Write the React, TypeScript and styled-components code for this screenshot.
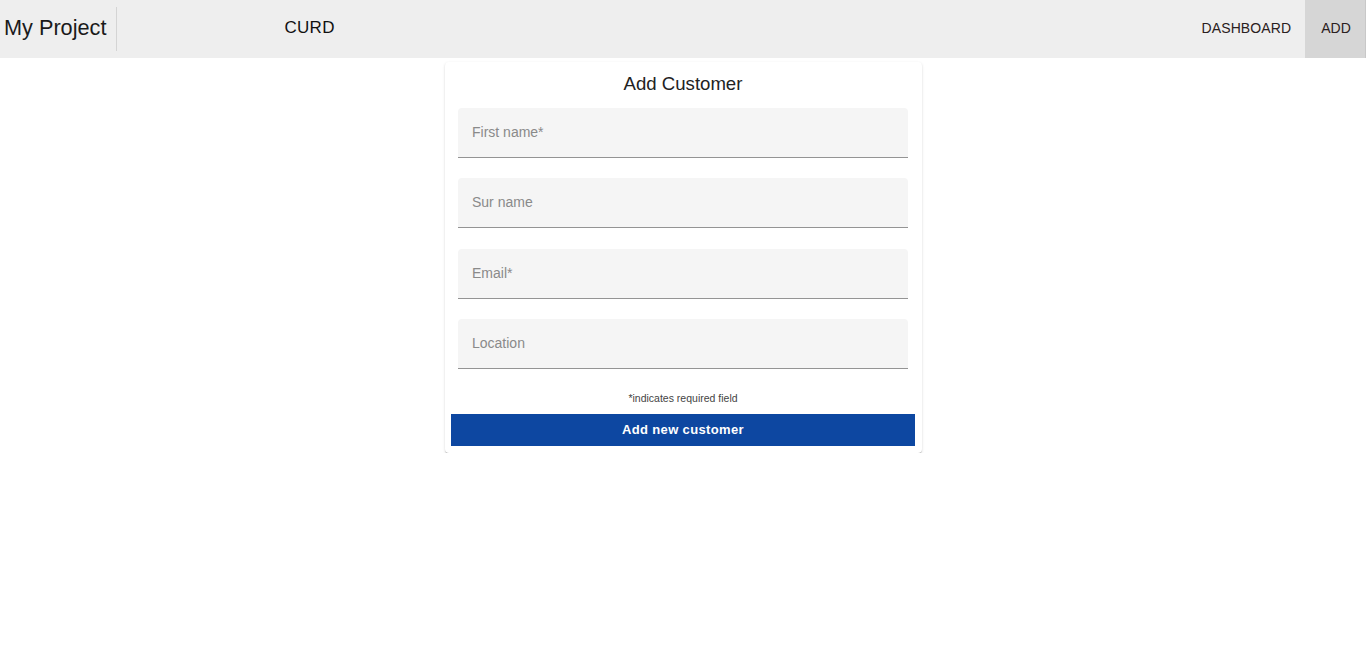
import React from "react";
import styled, { createGlobalStyle } from "styled-components";

const Global = createGlobalStyle`
  html, body { margin: 0; padding: 0; background: #fff; }
  body { font-family: "Liberation Sans", Arial, sans-serif; color: #222; }
  * { box-sizing: border-box; }
`;

const Header = styled.header`
  height: 58px;
  background: #eeeeee;
  display: flex;
  align-items: stretch;
`;

const Brand = styled.div`
  display: flex;
  align-items: center;
  padding: 0 10px 2px 4px;
  font-size: 21.7px;
  color: #1a1a1a;
  border-right: 1px solid #d4d4d4;
  margin: 7px 0;
`;

const Title = styled.div`
  display: flex;
  align-items: center;
  margin-left: 167px;
  padding-bottom: 2px;
  font-size: 17px;
  letter-spacing: 0.3px;
  color: #111;
  flex: 1;
`;

const NavButton = styled.div<{ $active?: boolean }>`
  display: flex;
  align-items: center;
  padding: ${(p) => (p.$active ? "0 14px 2px 16px" : "0 14px 2px")};
  font-size: 14px;
  letter-spacing: 0.1px;
  color: #2a2020;
  background: ${(p) => (p.$active ? "#d6d6d6" : "transparent")};
  border-right: ${(p) => (p.$active ? "1px solid #c8c8c8" : "none")};
`;

const Main = styled.main`
  display: flex;
  justify-content: center;
  padding-top: 4px;
`;

const Card = styled.div`
  width: 477px;
  background: #fff;
  border-radius: 4px;
  box-shadow: 0 2px 1px -1px rgba(0,0,0,0.2), 0 1px 1px 0 rgba(0,0,0,0.14), 0 1px 3px 0 rgba(0,0,0,0.12);
  padding: 12px 7px 7px;
  display: flex;
  flex-direction: column;
  align-items: center;
`;

const CardTitle = styled.h2`
  margin: 0;
  font-weight: 400;
  font-size: 18.6px;
  color: #222;
  height: 34px;
  line-height: 20px;
`;

const Fields = styled.div`
  width: 450px;
  display: flex;
  flex-direction: column;
  gap: 20.33px;
`;

const Field = styled.div`
  height: 50px;
  background: #f5f5f5;
  border-radius: 4px 4px 0 0;
  border-bottom: 1px solid #949494;
  display: flex;
  align-items: center;
  padding: 0 14px 1px;
  font-size: 14px;
  color: #8a8a8a;
`;

const Helper = styled.div`
  font-size: 10.5px;
  line-height: 12px;
  color: #444;
  margin-top: 23px;
  height: 22px;
`;

const Submit = styled.button`
  width: 464px;
  height: 32px;
  border: none;
  background: #0d47a1;
  color: #fff;
  font-family: "Liberation Sans", Arial, sans-serif;
  font-weight: 700;
  font-size: 13px;
  letter-spacing: 0.35px;
`;

export default function App() {
  return (
    <>
      <Global />
      <Header>
        <Brand>My Project</Brand>
        <Title>CURD</Title>
        <NavButton>DASHBOARD</NavButton>
        <NavButton $active>ADD</NavButton>
      </Header>
      <Main>
        <Card>
          <CardTitle>Add Customer</CardTitle>
          <Fields>
            <Field>First name*</Field>
            <Field>Sur name</Field>
            <Field>Email*</Field>
            <Field>Location</Field>
          </Fields>
          <Helper>*indicates required field</Helper>
          <Submit>Add new customer</Submit>
        </Card>
      </Main>
    </>
  );
}
